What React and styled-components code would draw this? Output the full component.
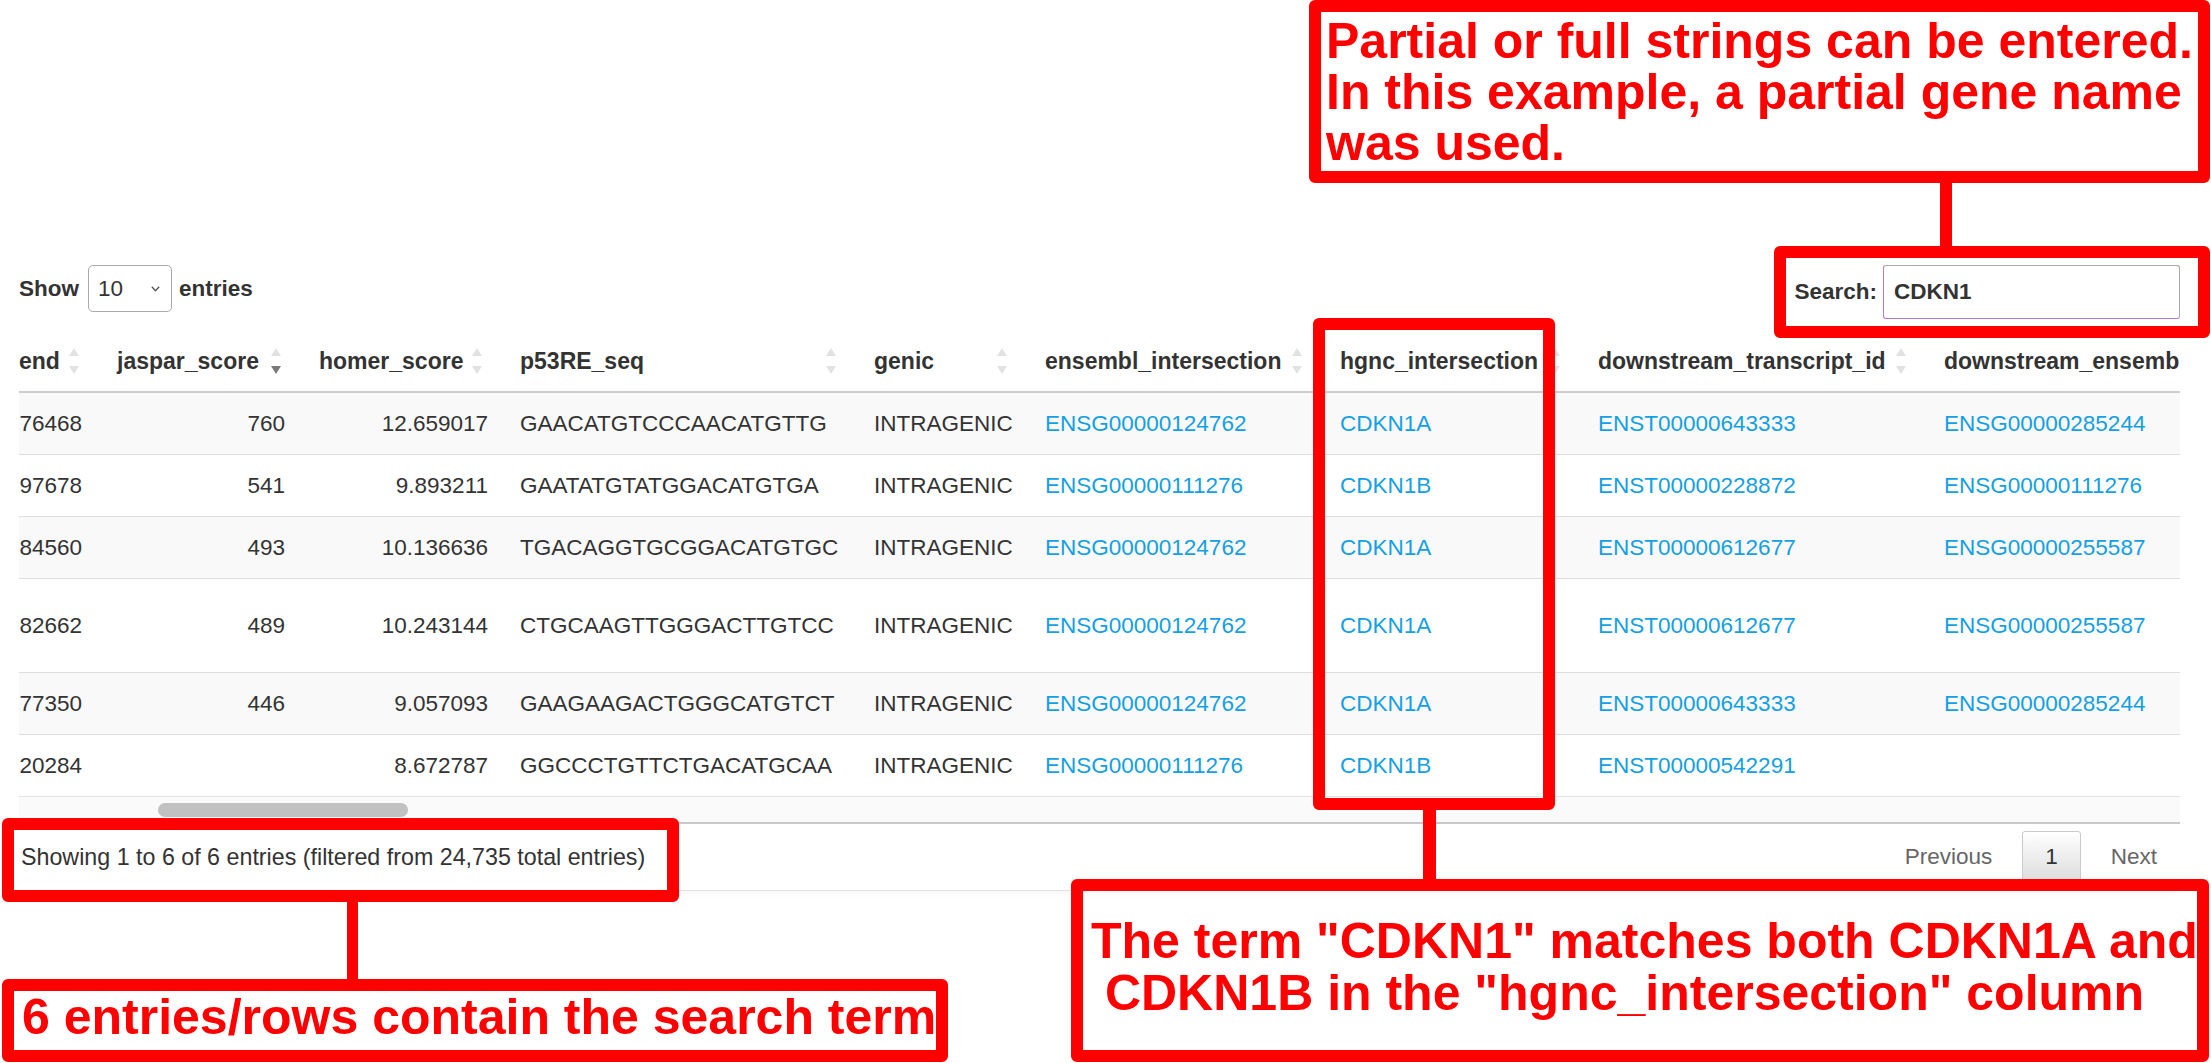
import React from "react";
import styled, { createGlobalStyle } from "styled-components";

const GlobalStyle = createGlobalStyle`
  html, body {
    margin: 0;
    padding: 0;
    background: #fff;
  }
  body {
    font-family: "Liberation Sans", Arial, Helvetica, sans-serif;
    color: #333;
  }
`;

const Page = styled.div`
  position: relative;
  width: 2211px;
  height: 1063px;
  overflow: hidden;
  box-sizing: border-box;
  padding: 265px 31px 0 19px;
  font-size: 22.5px;
`;

const Controls = styled.div`
  display: flex;
  justify-content: space-between;
  align-items: flex-start;
`;

const Group = styled.label`
  display: flex;
  align-items: center;
  height: ${(p) => p.$h}px;
  font-weight: bold;
`;

const Select = styled.div`
  box-sizing: border-box;
  width: 84px;
  height: 47px;
  margin: 0 7px 0 9px;
  padding: 0 11px 0 9px;
  display: flex;
  align-items: center;
  justify-content: space-between;
  border: 1px solid #aaa;
  border-radius: 5px;
  font-weight: normal;
  background: #fff;
`;

const SearchInput = styled.div`
  box-sizing: border-box;
  width: 297px;
  height: 54px;
  margin-left: 6px;
  padding-left: 10px;
  display: flex;
  align-items: center;
  border: 1px solid #a9a9a9;
  border-left-color: #b57acb;
  border-bottom-color: #b57acb;
  border-radius: 3px;
  font-weight: bold;
`;

const TableWrap = styled.div`
  margin-top: 12px;
  overflow: hidden;
`;

const Row = styled.div`
  display: grid;
  grid-template-columns: ${(p) => p.$cols};
  box-sizing: border-box;
  height: ${(p) => p.$h}px;
  border-top: ${(p) => (p.$first ? "none" : "1px solid #dedede")};
  background: ${(p) => (p.$striped ? "#f9f9f9" : "#fff")};
`;

const HeadRow = styled(Row)`
  border-top: none;
  border-bottom: 2px solid #cdcdcd;
  background: #fff;
  font-size: 23px;
`;

const Cell = styled.div`
  display: flex;
  align-items: center;
  justify-content: ${(p) => (p.$align === "right" ? "flex-end" : "flex-start")};
  padding: 0 ${(p) => p.$pr}px 0 ${(p) => p.$pl}px;
  white-space: nowrap;
  overflow: hidden;
  min-width: 0;
`;

const HeadCell = styled(Cell)`
  justify-content: space-between;
  padding-right: 24px;
  font-weight: bold;
`;

const Link = styled.a`
  color: #14a0e4;
  text-decoration: none;
`;

const SortSvg = styled.svg`
  flex: none;
  margin-left: 8px;
`;

const ScrollTrack = styled.div`
  box-sizing: border-box;
  height: 28px;
  padding: 6px 0 0 139px;
  border-top: 1px solid #e4e4e4;
  border-bottom: 2px solid #c9c9c9;
  background: #fafafa;
`;

const Thumb = styled.div`
  width: 250px;
  height: 14px;
  border-radius: 7px;
  background: #c1c1c1;
`;

const Footer = styled.div`
  display: flex;
  justify-content: space-between;
  align-items: center;
  height: 66px;
  border-bottom: 1px solid #e2e2e2;
  box-shadow: 0 6px 6px -3px rgba(0, 0, 0, 0.03);
`;

const Info = styled.div`
  padding-left: 2px;
  font-size: 23.25px;
`;

const Pager = styled.div`
  display: flex;
  align-items: center;
`;

const PageButton = styled.span`
  padding: 11px 22px;
  line-height: 28px;
  margin-left: 7px;
  border: 1px solid ${(p) => (p.$current ? "#cacaca" : "transparent")};
  border-radius: 3px;
  color: ${(p) => (p.$current ? "#333" : "#666")};
  background: ${(p) => (p.$current ? "linear-gradient(#fff, #dcdcdc)" : "transparent")};
`;

const Callout = styled.div`
  position: absolute;
  left: ${(p) => p.$x}px;
  top: ${(p) => p.$y}px;
  width: ${(p) => p.$w}px;
  height: ${(p) => p.$h}px;
  box-sizing: border-box;
  border: 12px solid #ff0000;
  border-radius: 6px;
  background: ${(p) => (p.$fill ? "#fff" : "transparent")};
  padding: ${(p) => p.$pad || "0"};
  color: #ff0000;
  font-weight: bold;
  font-size: 50px;
  line-height: ${(p) => p.$lh || 51}px;
  white-space: nowrap;
`;

const Connector = styled.div`
  position: absolute;
  left: ${(p) => p.$x}px;
  top: ${(p) => p.$y}px;
  width: ${(p) => p.$w}px;
  height: ${(p) => p.$h}px;
  background: #ff0000;
`;

const columns = [
  { title: "end", w: 84, align: "right", pl: 0, pr: 21, sort: "both" },
  { title: "jaspar_score", w: 202, align: "right", pl: 14, pr: 20, sort: "desc" },
  { title: "homer_score", w: 201, align: "right", pl: 14, pr: 18, sort: "both" },
  { title: "p53RE_seq", w: 354, align: "left", pl: 14, pr: 14, sort: "both" },
  { title: "genic", w: 171, align: "left", pl: 14, pr: 14, sort: "both" },
  { title: "ensembl_intersection", w: 295, align: "left", pl: 14, pr: 14, sort: "both", link: true },
  { title: "hgnc_intersection", w: 258, align: "left", pl: 14, pr: 14, sort: "both", link: true },
  { title: "downstream_transcript_id", w: 346, align: "left", pl: 14, pr: 14, sort: "both", link: true },
  { title: "downstream_ensembl_gene_id", w: 330, align: "left", pl: 14, pr: 14, sort: null, link: true },
];

const gridCols = columns.map((c) => `${c.w}px`).join(" ");

const rows = [
  ["76468", "760", "12.659017", "GAACATGTCCCAACATGTTG", "INTRAGENIC", "ENSG00000124762", "CDKN1A", "ENST00000643333", "ENSG00000285244"],
  ["97678", "541", "9.893211", "GAATATGTATGGACATGTGA", "INTRAGENIC", "ENSG00000111276", "CDKN1B", "ENST00000228872", "ENSG00000111276"],
  ["84560", "493", "10.136636", "TGACAGGTGCGGACATGTGC", "INTRAGENIC", "ENSG00000124762", "CDKN1A", "ENST00000612677", "ENSG00000255587"],
  ["82662", "489", "10.243144", "CTGCAAGTTGGGACTTGTCC", "INTRAGENIC", "ENSG00000124762", "CDKN1A", "ENST00000612677", "ENSG00000255587"],
  ["77350", "446", "9.057093", "GAAGAAGACTGGGCATGTCT", "INTRAGENIC", "ENSG00000124762", "CDKN1A", "ENST00000643333", "ENSG00000285244"],
  ["20284", "", "8.672787", "GGCCCTGTTCTGACATGCAA", "INTRAGENIC", "ENSG00000111276", "CDKN1B", "ENST00000542291", ""],
];

const rowHeights = [61, 62, 62, 94, 62, 62];

const SortIcon = ({ dir }) => (
  <SortSvg width="10" height="26" viewBox="0 0 10 26">
    <path d="M5 0 L10 8 L0 8 Z" fill={dir === "asc" ? "#7a7a7a" : "#e2e2e2"} />
    <path d="M0 18 L10 18 L5 26 Z" fill={dir === "desc" ? "#7a7a7a" : "#e2e2e2"} />
  </SortSvg>
);

const Chevron = () => (
  <svg width="9" height="6" viewBox="0 0 9 6">
    <path d="M0.8 0.8 L4.5 4.8 L8.2 0.8" stroke="#555" strokeWidth="1.3" fill="none" />
  </svg>
);

const App = () => {
  return (
    <Page>
      <GlobalStyle />
      <Controls>
        <Group $h={47}>
          Show
          <Select>
            10
            <Chevron />
          </Select>
          entries
        </Group>
        <Group $h={54}>
          Search:
          <SearchInput>CDKN1</SearchInput>
        </Group>
      </Controls>

      <TableWrap>
        <HeadRow $cols={gridCols} $h={62}>
          {columns.map((c) => (
            <HeadCell key={c.title} $pl={c.pl} $pr={24}>
              {c.title}
              {c.sort && <SortIcon dir={c.sort} />}
            </HeadCell>
          ))}
        </HeadRow>
        {rows.map((r, i) => (
          <Row key={i} $cols={gridCols} $h={rowHeights[i]} $first={i === 0} $striped={i % 2 === 0}>
            {r.map((v, j) => (
              <Cell key={j} $align={columns[j].align} $pl={columns[j].pl} $pr={columns[j].pr}>
                {columns[j].link && v ? <Link>{v}</Link> : v}
              </Cell>
            ))}
          </Row>
        ))}
        <ScrollTrack>
          <Thumb />
        </ScrollTrack>
      </TableWrap>

      <Footer>
        <Info>Showing 1 to 6 of 6 entries (filtered from 24,735 total entries)</Info>
        <Pager>
          <PageButton>Previous</PageButton>
          <PageButton $current>1</PageButton>
          <PageButton>Next</PageButton>
        </Pager>
      </Footer>

      <Callout $x={1309} $y={0} $w={901} $h={183} $fill $pad="4px 0 0 5px">
        Partial or full strings can be entered.
        <br />
        In this example, a partial gene name
        <br />
        was used.
      </Callout>
      <Connector $x={1940} $y={183} $w={12} $h={63} />
      <Callout $x={1774} $y={246} $w={436} $h={92} />

      <Callout $x={1313} $y={318} $w={242} $h={492} />
      <Connector $x={1423} $y={810} $w={13} $h={69} />
      <Callout $x={1071} $y={879} $w={1138} $h={183} $pad="24px 0 0 8px" $lh={52}>
        The term "CDKN1" matches both CDKN1A and
        <br />
        &nbsp;CDKN1B in the "hgnc_intersection" column
      </Callout>

      <Callout $x={2} $y={818} $w={677} $h={84} />
      <Connector $x={347} $y={902} $w={11} $h={77} />
      <Callout $x={2} $y={979} $w={946} $h={83} $fill $pad="1px 0 0 8px">
        6 entries/rows contain the search term
      </Callout>
    </Page>
  );
};

export default App;
